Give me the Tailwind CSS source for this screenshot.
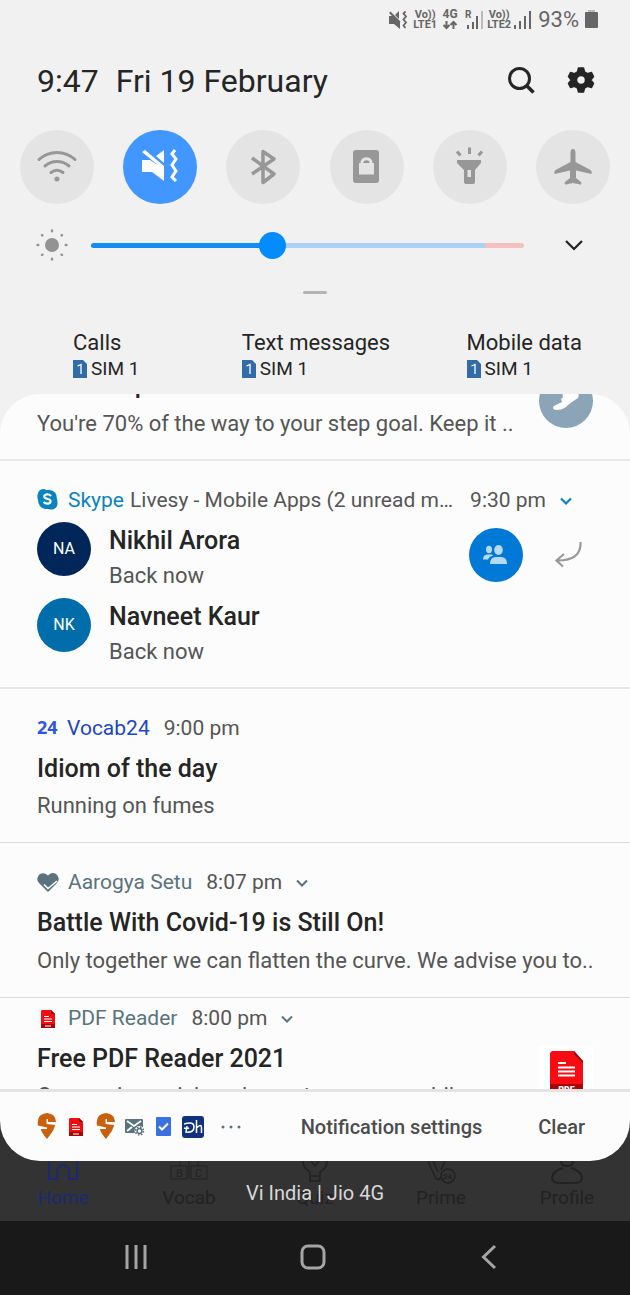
<!DOCTYPE html>
<html lang="en">
<head>
<meta charset="utf-8">
<meta name="viewport" content="width=device-width, initial-scale=1">
<title>Notification panel</title>
<script src="https://cdn.jsdelivr.net/npm/@tailwindcss/browser@4"></script>
</head>
<body class="flex min-h-screen flex-col bg-[#f1f1f1] font-['Roboto','Noto_Sans',sans-serif] text-[#252525]">

<!-- Status bar -->
<header class="flex h-[38px] items-center justify-end pt-px pr-8 text-[#666]">
  <svg class="mr-1 h-5 w-5" viewBox="0 0 20 20" fill="currentColor" aria-label="Vibrate"><path d="M1 6h3l8 6v7l-6-5H1zM7 5l4-4v8zM1 3l1.500-1.500 10 10-1.500 1.500z"/><path d="M17.500 1.500l-2 2 2.500 3-2.500 3 2.500 3-2.500 3 2 2.500" fill="none" stroke="currentColor" stroke-width="1.800"/></svg>
  <div class="flex w-[26px] flex-col items-center text-[11px] leading-[10px] font-bold"><span>Vo))</span><span class="font-bold">LTE1</span></div>
  <div class="ml-0.5 flex w-5 flex-col items-center text-xs leading-[11px] font-bold"><span>4G</span>
    <svg class="h-2.5 w-4" viewBox="0 0 16 10" fill="none" stroke="currentColor" stroke-width="2"><path d="M4.500 1v7M1.500 5l3 3 3-3M11.500 9V2M8.500 5l3-3 3 3"/></svg></div>
  <svg class="ml-0.5 h-5 w-[22px]" viewBox="0 0 22 20" fill="currentColor" aria-label="Signal, SIM 1"><text x="3" y="8" font-size="10" font-weight="700">R</text><path d="M5 15h2v4H5zM10 12h2v7h-2zM14 6h2v13h-2z"/><path d="M19 1h2v18h-2z" fill="#bbb"/></svg>
  <div class="ml-0.5 flex w-[26px] flex-col items-center text-[11px] leading-[10px] font-bold"><span>Vo))</span><span class="font-bold">LTE2</span></div>
  <svg class="ml-0.5 h-5 w-[18px]" viewBox="0 0 18 20" fill="currentColor" aria-label="Signal, SIM 2"><path d="M0 15h2v4H0zM5 11h2v8H5zM10 6h2v13h-2zM15 1h2v18h-2z"/></svg>
  <span class="ml-1.5 text-[22px] leading-6">93%</span>
  <svg class="ml-1.5 h-5 w-[13px]" viewBox="0 0 13 20" fill="currentColor" aria-label="Battery"><path d="M3 0h7v3H3z" fill="#bbb"/><rect y="2" width="13" height="16" rx="1"/></svg>
</header>

<main class="flex flex-1 flex-col">
  <div class="flex h-[86px] items-center pr-[35px] pl-[37px]">
    <h1 class="flex flex-1 gap-[17px] text-[32px] leading-9"><span>9:47</span><span>Fri 19 February</span></h1>
    <button aria-label="Search" class="mr-8"><svg class="h-7 w-7" viewBox="0 0 28 28" fill="none" stroke="currentColor" stroke-width="3"><circle cx="12.500" cy="11.500" r="10"/><path d="M19.500 18.500l7 7" stroke-width="3.500"/></svg></button>
    <button aria-label="Settings"><svg class="h-7 w-7" viewBox="0 0 28 28" fill="currentColor" fill-rule="evenodd" stroke="currentColor" stroke-width="1.500" stroke-linejoin="round"><path d="M11.500 1h5l1 4 3 1.700 4-1.200 2 4-2.700 3.500 2.700 3.500-2 4-4-1.200-3 1.700-1 4h-5l-1-4-3-1.700-4 1.200-2-4L4.200 13 1.500 9.500l2-4 4 1.200L10.500 5zM14 8.500a4.500 4.500 0 1 0 0 9 4.500 4.500 0 0 0 0-9z"/></svg></button>
  </div>

  <!-- Quick toggles -->
  <div class="mt-1.5 flex justify-between px-5 text-[#979797]">
    <button aria-label="Wi-Fi" class="grid size-[74px] place-items-center rounded-full bg-[#e4e4e4]"><svg class="size-11" viewBox="0 0 44 44" fill="none" stroke="currentColor" stroke-width="3" stroke-linecap="round"><path d="M4 14.500C14 5 30 5 40 14.500M10 21c7-6 17-6 24 0M16 27.500c4-3 8-3 12 0"/><circle cx="22" cy="34" r="1.500" fill="currentColor" stroke-width="2"/></svg></button>
    <button aria-label="Vibrate" class="grid size-[74px] place-items-center rounded-full bg-[#4196ff] text-white"><svg class="size-11" viewBox="0 0 44 44" fill="currentColor"><path d="M4 15h8l14 9v12l-12-9H4zM18 11l8-6v13zM4 7l3-2 19 16v4z"/><path d="M37 5l-3 4 4 5-4 6 4 6-4 6 4 4" fill="none" stroke="currentColor" stroke-width="3"/></svg></button>
    <button aria-label="Bluetooth" class="grid size-[74px] place-items-center rounded-full bg-[#e4e4e4]"><svg class="size-11" viewBox="0 0 44 44" fill="none" stroke="currentColor" stroke-width="3.500" stroke-linejoin="round"><path d="M11 13l22 16-11 8.500v-31L33 14 11 29"/></svg></button>
    <button aria-label="Screen lock" class="grid size-[74px] place-items-center rounded-full bg-[#e4e4e4]"><svg class="size-11" viewBox="0 0 44 44"><rect x="8" y="5" width="26" height="33" rx="3" fill="currentColor"/><path d="M14 18h15v11.500H14z" fill="#e4e4e4"/><path d="M17 19v-1.500c0-5 9-5 9 0V19" fill="none" stroke="#e4e4e4" stroke-width="3"/></svg></button>
    <button aria-label="Flashlight" class="grid size-[74px] place-items-center rounded-full bg-[#e4e4e4]"><svg class="size-11" viewBox="0 0 44 44" fill="currentColor"><path fill-rule="evenodd" d="M9 15h24v3l-6 7v12q0 2-2 2h-7q-2 0-2-2V25l-7-7zM19.500 25v7h3.500v-7z"/><path d="M21.500 2.500v6.500M9 6.500l3.500 4M34 6.500l-3.500 4" stroke="currentColor" stroke-width="3"/></svg></button>
    <button aria-label="Airplane mode" class="grid size-[74px] place-items-center rounded-full bg-[#e4e4e4]"><svg class="size-11" viewBox="0 0 44 44" fill="currentColor"><path d="M22 4q2.500 0 2.500 4v9l15 8q2 2 1 4L25 25.500V33l5 4q1 3-1 2.500L22 38l-7 1.500q-2 0-1-2.500l5-4v-7.500L3.500 29q-1-2 1-4l15-8V8q0-4 2.500-4z"/></svg></button>
  </div>

  <!-- Brightness -->
  <div class="mt-[23px] flex h-9 items-center pr-[46px] pl-9">
    <svg class="mr-[23px] size-8 shrink-0" viewBox="0 0 32 32" fill="#939393" aria-hidden="true"><circle cx="16" cy="16" r="7"/><g stroke="#939393" stroke-width="2.400" stroke-linecap="round"><path d="M16 1.500v.8M16 29.700v.8M1.500 16h.8M29.700 16h.8M6 6l.4.400M25.600 25.600l.4.400M26 6l-.4.400M6.400 25.600l-.4.400"/></g></svg>
    <input type="range" min="0" max="200" value="83" aria-label="Brightness" class="h-7 min-w-0 flex-1 cursor-pointer appearance-none bg-transparent [&::-webkit-slider-runnable-track]:h-[5px] [&::-webkit-slider-runnable-track]:rounded-full [&::-webkit-slider-runnable-track]:bg-[linear-gradient(to_right,#108cf2_42%,#abd1f4_42%,#abd1f4_91%,#f4c0c0_91%)] [&::-webkit-slider-thumb]:-mt-[11px] [&::-webkit-slider-thumb]:size-[27px] [&::-webkit-slider-thumb]:appearance-none [&::-webkit-slider-thumb]:rounded-full [&::-webkit-slider-thumb]:bg-[#008cff]">
    <button aria-label="Expand" class="ml-10"><svg class="h-5 w-5" viewBox="0 0 20 20" fill="none" stroke="#222" stroke-width="2.200"><path d="M2 6l8 8 8-8"/></svg></button>
  </div>
  <div class="mx-auto mt-7 h-[3px] w-6 rounded-full bg-[#b4b4b4]"></div>

  <!-- SIM choices -->
  <div class="mt-[35px] flex justify-between pr-12 pl-[73px] text-[22px] leading-7">
    <div><div>Calls</div><div class="flex h-6 items-center gap-1 text-[19px] leading-6"><svg class="h-[18px] w-3.5" viewBox="0 0 14 18"><path d="M0 0h10l4 4v14H0z" fill="#326ca8"/><path d="M4.500 6L8 4.500V14" fill="none" stroke="#fff" stroke-width="1.300"/></svg>SIM 1</div></div>
    <div class="pl-[26px]"><div>Text messages</div><div class="flex h-6 items-center gap-1 text-[19px] leading-6"><svg class="h-[18px] w-3.5" viewBox="0 0 14 18"><path d="M0 0h10l4 4v14H0z" fill="#326ca8"/><path d="M4.500 6L8 4.500V14" fill="none" stroke="#fff" stroke-width="1.300"/></svg>SIM 1</div></div>
    <div><div>Mobile data</div><div class="flex h-6 items-center gap-1 text-[19px] leading-6"><svg class="h-[18px] w-3.5" viewBox="0 0 14 18"><path d="M0 0h10l4 4v14H0z" fill="#326ca8"/><path d="M4.500 6L8 4.500V14" fill="none" stroke="#fff" stroke-width="1.300"/></svg>SIM 1</div></div>
  </div>

  <!-- Notifications -->
  <div class="mt-[13px] overflow-hidden rounded-t-[40px] bg-[#fcfcfc] text-[22px] text-[#555]">
    <article class="flex h-[67px] items-end overflow-hidden border-b-2 border-[#e8e8e8] pr-[37px] pl-[37px]">
      <div class="min-w-0 flex-1 pb-[21px]">
        <h2 class="mb-[9px] text-[25px] leading-8 font-medium text-[#252525]">4200 steps</h2>
        <p class="leading-7">You're 70% of the way to your step goal. Keep it ..</p>
      </div>
      <svg class="mb-[31px] size-[54px] shrink-0" viewBox="0 0 54 54"><circle cx="27" cy="27" r="27" fill="#8ba4b7"/><path d="M23 17l14-3q4 6 2 10-8 5-12 9-4 3-10 3-5-1-2-4l8-4-1-3 2-2z" fill="#fff"/></svg>
    </article>

    <article class="border-b-2 border-[#e8e8e8] pt-[26px] pr-12 pb-5 pl-[37px]">
      <div class="flex h-7 items-center text-[21px]">
        <svg class="mr-2.5 mb-[3px] size-[21px] shrink-0" viewBox="0 0 21 21"><path d="M3 1Q7-1 9 1h4q7 1 7 9 2 8-3 10-3 1-5 0H8q-7-2-7-9Q-1 4 3 1z" fill="#0a84c1"/><path d="M14 7q-2-2-4-1.700-3 .4-2.700 2.500.3 1.500 3.300 2.200 3 .7 3 2.500-.2 2-3 2.200-2.400 0-4-1.700" fill="none" stroke="#fff" stroke-width="2.200"/></svg>
        <span class="mr-1.5 text-[#0a84c1]">Skype</span><span class="min-w-0 flex-1 truncate">Livesy - Mobile Apps (2 unread messages)</span>
        <time class="ml-3">9:30 pm</time>
        <button aria-label="Expand Skype" class="mr-2.5 ml-3.5"><svg class="h-3 w-3" viewBox="0 0 12 12" fill="none" stroke="#0a84c1" stroke-width="2.200"><path d="M1 3.500l5 5 5-5"/></svg></button>
      </div>
      <div class="flex">
        <ul class="flex-1">
          <li class="flex h-[76px] gap-[18px] pt-1"><span class="mt-[3px] grid size-[54px] place-items-center rounded-full bg-[#00265a] text-base text-white">NA</span><div class="pt-1.5"><h2 class="text-[25px] leading-8 font-medium text-[#252525]">Nikhil Arora</h2><p class="pt-[3px] leading-8">Back now</p></div></li>
          <li class="flex h-[76px] gap-[18px] pt-1"><span class="mt-[3px] grid size-[54px] place-items-center rounded-full bg-[#006dab] text-base text-white">NK</span><div class="pt-1.5"><h2 class="text-[25px] leading-8 font-medium text-[#252525]">Navneet Kaur</h2><p class="pt-[3px] leading-8">Back now</p></div></li>
        </ul>
        <svg class="mt-[13px] mr-[31px] size-[54px] shrink-0" viewBox="0 0 54 54"><circle cx="27" cy="27" r="27" fill="#0078d6"/><g fill="#b5daf5"><ellipse cx="29.500" cy="22" rx="4.300" ry="5"/><ellipse cx="20" cy="21.500" rx="3" ry="3.700"/><path d="M21 36q0-7 6-7h5q6 0 6 7zM14 31.500q0-5 5-5h4l1 1q-4 1-5 4z"/></g></svg>
        <button aria-label="Reply" class="mt-[26px] self-start"><svg class="h-7 w-7" viewBox="0 0 28 28" fill="none" stroke="#999" stroke-width="2.200"><path d="M26.500 1q1 19-24 18.500M10 13L2.500 19.500l6.500 6"/></svg></button>
      </div>
    </article>

    <article class="border-b border-[#dedede] px-[37px] pt-[26px] pb-5">
      <div class="flex h-7 items-center text-[21px]"><span class="mr-2 mb-1 w-[22px] font-['Open_Sans'] text-lg leading-6 font-bold text-[#2f55e0]" aria-hidden="true">24</span><span class="mr-3.5 text-[#1c47c4]">Vocab24</span><time>9:00 pm</time></div>
      <h2 class="pt-2.5 text-[25px] leading-8 font-medium text-[#252525]">Idiom of the day</h2>
      <p class="pt-[5px] leading-8">Running on fumes</p>
    </article>

    <article class="border-b border-[#dedede] px-[37px] pt-[26px] pb-5">
      <div class="flex h-7 items-center text-[21px]">
        <svg class="mr-[9px] h-[21px] w-[22px]" viewBox="0 0 22 21"><path d="M11 2.500q4-4 8-1.500 5 4 1 9l-9 9-9-9Q-2 5 3 1q4-2 8 1.500z" fill="#5a737e"/><path d="M7 11.500l4 4 9-7.500" fill="none" stroke="#fcfcfc" stroke-width="1.600"/></svg>
        <span class="mr-3.5 text-[#5a737e]">Aarogya Setu</span><time>8:07 pm</time>
        <button aria-label="Expand Aarogya Setu" class="ml-3.5"><svg class="h-3 w-3" viewBox="0 0 12 12" fill="none" stroke="#5a737e" stroke-width="2"><path d="M1 3.500l5 5 5-5"/></svg></button>
      </div>
      <h2 class="pt-2.5 text-[25px] leading-8 font-medium text-[#252525]">Battle With Covid-19 is Still On!</h2>
      <p class="pt-1.5 leading-8 whitespace-nowrap">Only together we can flatten the curve. We advise you to..</p>
    </article>

    <article class="flex h-[91px] justify-between overflow-hidden pt-[7px] pr-[37px] pl-[37px]">
      <div>
        <div class="flex h-7 items-center text-[21px]">
          <svg class="mr-[13px] ml-1 h-[18px] w-3.5" viewBox="0 0 14 18"><path d="M1 0h9l4 4v14H0V1z" fill="#f00d10"/><path d="M0 14h14v4H0z" fill="#a00a0c"/><path d="M10 0l4 4h-4z" fill="#900"/><path d="M3 6.500h5M3 9h8M3 11.500h8M4 16h6" stroke="#fff" stroke-width="1.200"/></svg>
          <span class="mr-3.5 text-[#5a737e]">PDF Reader</span><time>8:00 pm</time>
          <button aria-label="Expand PDF Reader" class="ml-3.5"><svg class="h-3 w-3" viewBox="0 0 12 12" fill="none" stroke="#5a737e" stroke-width="2"><path d="M1 3.500l5 5 5-5"/></svg></button>
        </div>
        <h2 class="pt-2.5 text-[25px] leading-8 font-medium text-[#252525]">Free PDF Reader 2021</h2>
        <p class="pt-[5px] leading-8 whitespace-nowrap">Conversion quick and easy to use on mobile</p>
      </div>
      <svg class="mt-[41px] size-[54px] shrink-0" viewBox="0 0 54 54"><path d="M0 0h54v54H0z" fill="#fff"/><path d="M13 5h22l9 10v34H11V7z" fill="#f80c12"/><path d="M35 5l9 10v2l-9-9z" fill="#9b0609"/><path d="M11 38h33v11H11z" fill="#a70709"/><path d="M19 17h8M19 21.500h17M19 25.500h17M19 29.500h17" stroke="#fff" stroke-width="2"/><text x="27.500" y="47" text-anchor="middle" font-size="9" font-weight="900" fill="#fff">PDF</text></svg>
    </article>
  </div>

  <!-- Panel footer -->
  <div class="bg-[#333]">
    <div class="flex h-[72px] items-center overflow-hidden rounded-b-[40px] border-t-[3px] border-[#e4e4e4] bg-[#fcfcfc] pr-[45px] pl-[37px] text-[#4c4c4c]">
      <div class="flex flex-1 items-center">
        <svg class="h-[27px] w-[19px]" viewBox="0 0 19 27"><path d="M10 0Q19 1 19 9h-8V6H9.500v5l8.500 1q0 4-8 14Q4 19 4 16h6v-1.500L1 12.500Q-1 1 10 0z" fill="#c8600e"/></svg>
        <svg class="ml-[13px] h-[18px] w-3.5" viewBox="0 0 14 18"><path d="M1 0h9l4 4v14H0V1z" fill="#f00d10"/><path d="M0 14h14v4H0z" fill="#a00a0c"/><path d="M10 0l4 4h-4z" fill="#900"/><path d="M3 6.500h5M3 9h8M3 11.500h8M4 16h6" stroke="#fff" stroke-width="1.200"/></svg>
        <svg class="ml-[13px] h-[27px] w-[19px]" viewBox="0 0 19 27"><path d="M10 0Q19 1 19 9h-8V6H9.500v5l8.500 1q0 4-8 14Q4 19 4 16h6v-1.500L1 12.500Q-1 1 10 0z" fill="#c8600e"/></svg>
        <svg class="ml-2.5 h-[18px] w-5" viewBox="0 0 20 18"><rect y="1" width="18" height="14" rx="1" fill="#5a737e"/><path d="M2 3l7 5 7-5M2 13l5-4M12 9l2 1" fill="none" stroke="#fff" stroke-width="1.800"/><circle cx="14.500" cy="13" r="5" fill="#fcfcfc"/><circle cx="14.500" cy="13" r="2.400" fill="none" stroke="#5a737e" stroke-width="1.500"/><circle cx="14.500" cy="13" r="4" fill="none" stroke="#5a737e" stroke-width="1.500" stroke-dasharray="1.600 1.540"/></svg>
        <svg class="ml-[11px] h-[19px] w-[15px]" viewBox="0 0 15 19"><rect width="15" height="19" rx="1" fill="#3a70e0"/><path d="M3 9.500l3 3 6-6" fill="none" stroke="#fff" stroke-width="2"/></svg>
        <svg class="ml-[11px] size-[22px]" viewBox="0 0 22 22"><rect width="22" height="22" rx="3" fill="#10327c"/><path d="M2 8q10-3 10 3 0 6-8 5l1-6M2 12q3 1 5 0M14.500 4v13M14.500 12q5-5 5 0v5" fill="none" stroke="#fff" stroke-width="1.500"/></svg>
        <svg class="ml-4 h-1 w-[22px]" viewBox="0 0 22 4" fill="#5a737e"><circle cx="3" cy="2" r="1.500"/><circle cx="11" cy="2" r="1.500"/><circle cx="19" cy="2" r="1.500"/></svg>
      </div>
      <button class="text-[20px] leading-6 font-medium">Notification settings</button>
      <button class="ml-14 text-[20px] leading-6 font-medium">Clear</button>
    </div>
  </div>

  <!-- Dimmed app behind the panel -->
  <div class="relative h-[60px] bg-[#333] text-[19px] leading-6 text-[#222]">
    <div class="flex justify-between pr-9 pl-9" aria-hidden="true">
      <div class="flex w-[54px] flex-col items-center text-[#1b2a70]"><svg class="h-[25px] w-8" viewBox="0 0 32 25" fill="none" stroke="currentColor" stroke-width="2"><path d="M2 0v18h8v-9q6-10 12 0v9h8V0"/></svg><span>Home</span></div>
      <div class="flex w-[54px] flex-col items-center"><svg class="h-[25px] w-10" viewBox="0 0 40 25" fill="none" stroke="currentColor"><path d="M2 5h16v13H2zM22 5h16v13H22zM11 0v5M29 0v5M20 0v18"/><text x="7" y="16" font-size="11" fill="currentColor" stroke="none">B</text><text x="26" y="16" font-size="11" fill="currentColor" stroke="none">C</text></svg><span>Vocab</span></div>
      <div class="flex w-[54px] flex-col items-center"><svg class="h-[25px] w-8" viewBox="0 0 32 25" fill="none" stroke="currentColor" stroke-width="1.500"><path d="M4 0q0 7 7 11v9h10v-9q7-4 7-11M12 0l4 5 4-5M11 15h10"/></svg><span>Quiz</span></div>
      <div class="flex w-[54px] flex-col items-center"><svg class="h-[25px] w-8" viewBox="0 0 32 25" fill="none" stroke="currentColor" stroke-width="1.500"><path d="M3 0l7 16q3 5 6 0M8 0l5 11M20 0l-4 9"/><circle cx="23" cy="15" r="7"/><text x="18" y="18" font-size="8" font-weight="700" fill="currentColor" stroke="none">24</text></svg><span>Prime</span></div>
      <div class="flex w-[54px] flex-col items-center"><svg class="h-[25px] w-8" viewBox="0 0 32 25" fill="none" stroke="currentColor" stroke-width="2"><path d="M10 0q0 5 6 5t6-5M12 7q-11 3-11 11 1 4 8 4h14q7 0 8-4 0-8-11-11"/></svg><span>Profile</span></div>
    </div>
    <p class="absolute inset-x-0 top-5 text-center text-xl leading-6 text-[#d8d8d8]">Vi India | Jio 4G</p>
  </div>
</main>

<!-- System navigation -->
<nav class="flex h-[74px] items-center justify-between bg-[#191919] pr-[127px] pb-0.5 pl-[122px] text-[#a5a5a5]">
  <button aria-label="Recent apps"><svg class="size-7" viewBox="0 0 28 28" stroke="currentColor" stroke-width="3"><path d="M5 2v24M14 2v24M23 2v24"/></svg></button>
  <button aria-label="Home"><svg class="size-7" viewBox="0 0 28 28" fill="none" stroke="currentColor" stroke-width="3"><rect x="3" y="3" width="22" height="22" rx="6"/></svg></button>
  <button aria-label="Back"><svg class="size-7" viewBox="0 0 28 28" fill="none" stroke="currentColor" stroke-width="3"><path d="M20 3L8.500 14 20 25"/></svg></button>
</nav>
</body>
</html>
